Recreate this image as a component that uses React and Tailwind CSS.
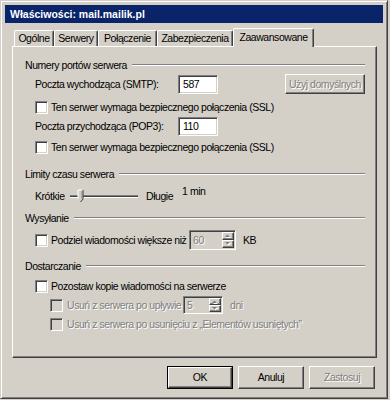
import React from "react";

const sunken =
  "border border-t-[#808080] border-l-[#808080] border-b-white border-r-white shadow-[inset_1px_1px_0_#404040,inset_-1px_-1px_0_#d4d0c8]";
const raised =
  "border border-t-white border-l-white border-b-[#404040] border-r-[#404040] shadow-[inset_-1px_-1px_0_#808080]";
const dis = "text-[#808080] [text-shadow:1px_1px_0_#ffffff]";

function Checkbox({ disabled }) {
  return (
    <span
      className={`inline-block w-[13px] h-[13px] shrink-0 ${sunken} ${
        disabled ? "bg-[#d4d0c8]" : "bg-white"
      }`}
    />
  );
}

function Group({ title, className = "" }) {
  return (
    <div className={`flex items-center h-[14px] ${className}`}>
      <span className="whitespace-nowrap">{title}</span>
      <div className="flex-1 ml-[5px] h-[2px] border-t border-t-[#808080] border-b border-b-white" />
    </div>
  );
}

function Arrow({ up }) {
  return (
    <svg width="6" height="4" viewBox="0 0 6 4">
      {up ? (
        <>
          <path d="M1 4 L3.5 1.5 L6 4 Z" fill="#ffffff" />
          <path d="M0 3 L2.5 0.5 L5 3 Z" fill="#808080" />
        </>
      ) : (
        <>
          <path d="M1 1 L3.5 3.5 L6 1 Z" fill="#ffffff" />
          <path d="M0 0 L2.5 2.5 L5 0 Z" fill="#808080" />
        </>
      )}
    </svg>
  );
}

function Spinner({ value, className }) {
  return (
    <div className={`flex shrink-0 bg-[#d4d0c8] ${sunken} ${className}`}>
      <span className={`flex-1 flex items-center pl-[3px] ${dis}`}>{value}</span>
      <div className="flex flex-col w-[13px] py-[1px] pr-[1px]">
        <div className={`flex-1 flex items-center justify-center bg-[#d4d0c8] ${raised}`}>
          <Arrow up />
        </div>
        <div className={`flex-1 flex items-center justify-center bg-[#d4d0c8] ${raised}`}>
          <Arrow />
        </div>
      </div>
    </div>
  );
}

function Button({ children, disabled, def, className = "" }) {
  const inner = (
    <div
      className={`w-full h-full flex items-center justify-center bg-[#d4d0c8] ${raised} ${
        disabled ? dis : ""
      }`}
    >
      {children}
    </div>
  );
  if (def) {
    return (
      <div className={`border border-black ${className}`}>{inner}</div>
    );
  }
  return <div className={className}>{inner}</div>;
}

function Tab({ children, w, selected }) {
  if (selected) {
    return (
      <div
        className={`${w} h-[19px] -mb-px relative z-10 bg-[#d4d0c8] border-t border-l border-t-white border-l-white border-r border-r-[#404040] shadow-[inset_-1px_0_0_#808080] rounded-tl-[2px] rounded-tr-[2px] flex items-center justify-center pb-[2px]`}
      >
        {children}
      </div>
    );
  }
  return (
    <div
      className={`${w} h-[16px] bg-[#d4d0c8] border-t border-l border-t-white border-l-white border-r border-r-[#404040] shadow-[inset_-1px_0_0_#808080] rounded-tl-[2px] rounded-tr-[2px] flex items-center justify-center`}
    >
      {children}
    </div>
  );
}

function Slider() {
  return (
    <svg width="68" height="14" viewBox="0 0 68 14" className="shrink-0">
      <rect x="0" y="6" width="68" height="1" fill="#808080" />
      <rect x="0" y="7" width="68" height="1" fill="#404040" />
      <rect x="0" y="8" width="68" height="1" fill="#ffffff" />
      <path d="M8 1 H13 V10 L10.5 13 L8 10 Z" fill="#d4d0c8" />
      <path d="M8 1 H12.5 M8 1 V10" stroke="#ffffff" strokeWidth="1" fill="none" />
      <path d="M13 1 V10 L10.5 13" stroke="#404040" strokeWidth="1" fill="none" />
      <path d="M12 2 V9.5" stroke="#808080" strokeWidth="1" fill="none" />
    </svg>
  );
}

export default function App() {
  return (
    <div className="w-[390px] h-[400px] bg-[#d4d0c8] font-['Liberation_Sans',Arial,sans-serif] text-[10.5px] tracking-[-0.45px] text-black leading-none overflow-hidden">
      <div className="w-[388px] h-[399px] border border-t-[#d4d0c8] border-l-[#d4d0c8] border-r-[#404040] border-b-[#404040] shadow-[inset_1px_1px_0_#ffffff,inset_-1px_-1px_0_#808080] p-[4px] flex flex-col">
        {/* Title bar */}
        <div className="h-[18px] bg-[#0a246a] text-white font-bold tracking-normal pl-[5px] flex items-center">
          Właściwości: mail.mailik.pl
        </div>

        {/* Tabs */}
        <div className="mt-[5px] h-[18px] pl-[9px] flex items-end">
          <Tab w="w-[40px]">Ogólne</Tab>
          <Tab w="w-[44px]">Serwery</Tab>
          <Tab w="w-[59px]">Połączenie</Tab>
          <Tab w="w-[76px]">Zabezpieczenia</Tab>
          <Tab w="w-[81px]" selected>
            Zaawansowane
          </Tab>
        </div>

        {/* Panel */}
        <div className="w-[365px] h-[312px] ml-[7px] bg-[#d4d0c8] border border-t-white border-l-white border-r-[#404040] border-b-[#404040] shadow-[inset_-1px_-1px_0_#808080] pl-[12px] pr-[11px] pt-[11px] flex flex-col">
          <Group title="Numery portów serwera" />

          <div className="mt-[2px] h-[20px] pl-[10px] flex items-center">
            <span className="w-[143px] shrink-0 whitespace-nowrap">Poczta wychodząca (SMTP):</span>
            <div className={`w-[40px] h-[19px] bg-white ${sunken} flex items-center pl-[4px]`}>587</div>
            <Button disabled className="ml-auto w-[80px] h-[20px]">
              Użyj domyślnych
            </Button>
          </div>

          <div className="mt-[6px] h-[15px] pl-[10px] flex items-center gap-[3px]">
            <Checkbox />
            <span className="whitespace-nowrap">Ten serwer wymaga bezpiecznego połączenia (SSL)</span>
          </div>

          <div className="mt-[1px] h-[20px] pl-[10px] flex items-center">
            <span className="w-[143px] shrink-0 whitespace-nowrap">Poczta przychodząca (POP3):</span>
            <div className={`w-[40px] h-[19px] bg-white ${sunken} flex items-center pl-[4px]`}>110</div>
          </div>

          <div className="mt-[4px] h-[15px] pl-[10px] flex items-center gap-[3px]">
            <Checkbox />
            <span className="whitespace-nowrap">Ten serwer wymaga bezpiecznego połączenia (SSL)</span>
          </div>

          <Group title="Limity czasu serwera" className="mt-[12px]" />

          <div className="mt-[5px] h-[20px] pl-[10px] flex items-center">
            <span className="w-[35px] shrink-0">Krótkie</span>
            <Slider />
            <span className="ml-[8px]">Długie</span>
            <span className="ml-[9px] mb-[10px]">1 min</span>
          </div>

          <Group title="Wysyłanie" className="mt-[5px]" />

          <div className="mt-[5px] h-[20px] pl-[10px] flex items-center">
            <Checkbox />
            <span className="ml-[3px] w-[135px] shrink-0 whitespace-nowrap">Podziel wiadomości większe niż</span>
            <Spinner value="60" className="ml-[3px] w-[47px] h-[20px]" />
            <span className="ml-[7px]">KB</span>
          </div>

          <Group title="Dostarczanie" className="mt-[9px]" />

          <div className="mt-[6px] h-[15px] pl-[10px] flex items-center gap-[3px]">
            <Checkbox />
            <span className="whitespace-nowrap">Pozostaw kopie wiadomości na serwerze</span>
          </div>

          <div className="mt-[2px] h-[18px] pl-[25px] flex items-center">
            <Checkbox disabled />
            <span className={`ml-[4px] w-[116px] shrink-0 whitespace-nowrap ${dis}`}>Usuń z serwera po upływie</span>
            <Spinner value="5" className="w-[40px] h-[18px]" />
            <span className={`ml-[7px] ${dis}`}>dni</span>
          </div>

          <div className="mt-[2px] h-[16px] pl-[25px] flex items-center">
            <Checkbox disabled />
            <span className={`ml-[4px] whitespace-nowrap ${dis}`}>
              Usuń z serwera po usunięciu z „Elementów usuniętych”
            </span>
          </div>
        </div>

        {/* Buttons */}
        <div className="mt-[8px] w-[365px] ml-[7px] pr-[2px] flex justify-end gap-[5px]">
          <Button def className="w-[66px] h-[23px]">
            OK
          </Button>
          <Button className="w-[66px] h-[23px]">Anuluj</Button>
          <Button disabled className="w-[66px] h-[23px]">
            Zastosuj
          </Button>
        </div>
      </div>
    </div>
  );
}
